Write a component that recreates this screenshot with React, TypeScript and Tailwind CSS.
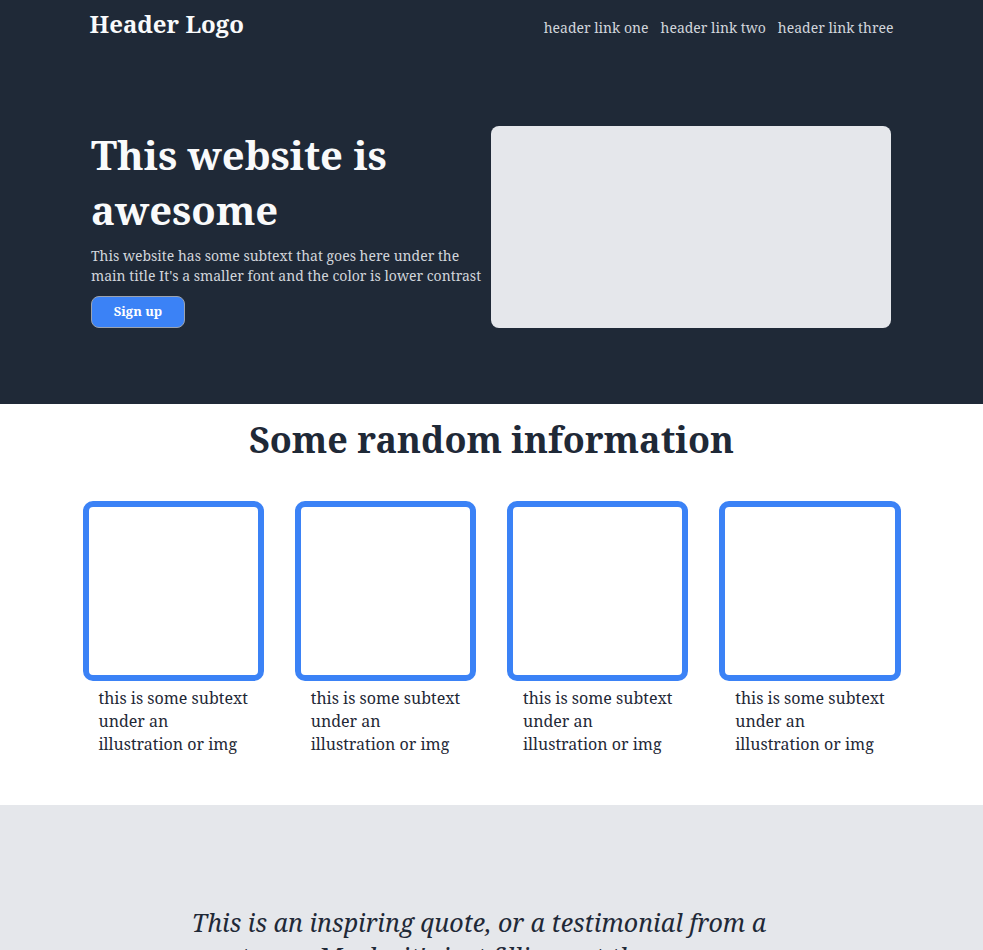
const serif = "font-['Noto_Serif','DejaVu_Serif',serif]";

const cards = [1, 2, 3, 4];

export default function App() {
  return (
    <div className={serif}>
      <div className="bg-[#1f2937]">
        <header className="w-[804px] mx-auto pt-2 flex justify-between items-end">
          <div className="text-2xl leading-8 font-bold text-[#f9fafb]">Header Logo</div>
          <nav className="flex gap-3 text-sm text-[#d1d5db] pb-[2px]">
            <a href="#">header link one</a>
            <a href="#">header link two</a>
            <a href="#">header link three</a>
          </nav>
        </header>
        <section className="w-[801px] mx-auto pt-[86px] pb-[76px] flex items-center">
          <div className="w-[400px]">
            <h1 className="text-[40px] leading-[55px] font-bold text-[#f9fafb]">This website is awesome</h1>
            <p className="mt-[9px] text-sm leading-5 text-[#d1d5db]">
              This website has some subtext that goes here under the main title It's a smaller font and the color is lower contrast
            </p>
            <button className="mt-[10px] w-[94px] h-8 rounded-lg bg-[#3b82f6] border border-[#9ca3af] text-white text-[13px] font-bold">
              Sign up
            </button>
          </div>
          <div className="w-[400px] h-[202px] rounded-lg bg-[#e5e7eb]" />
        </section>
      </div>

      <section className="bg-white pt-[12px] pb-[49px]">
        <h2 className="text-center text-4xl leading-[48px] font-bold text-[#1f2937]">Some random information</h2>
        <div className="mt-[37px] w-[818px] mx-auto grid grid-cols-4 gap-[31px]">
          {cards.map((c) => (
            <div key={c}>
              <div className="h-[180px] rounded-[10px] border-[6px] border-[#3b82f6]" />
              <p className="mt-[6px] pl-4 pr-2 text-base leading-[23px] text-[#1f2937]">
                this is some subtext under an illustration or img
              </p>
            </div>
          ))}
        </div>
      </section>

      <section className="bg-[#e5e7eb] pt-[100px] pb-[100px] pr-[25px]">
        <blockquote className="w-[600px] mx-auto text-center italic text-[25px] leading-[34px] text-[#1f2937]">
          This is an inspiring quote, or a testimonial from a customer. Maybe it's just filling out the space, or maybe people will actually read it. Who knows? All I know is that it looks cool.
        </blockquote>
      </section>
    </div>
  );
}
